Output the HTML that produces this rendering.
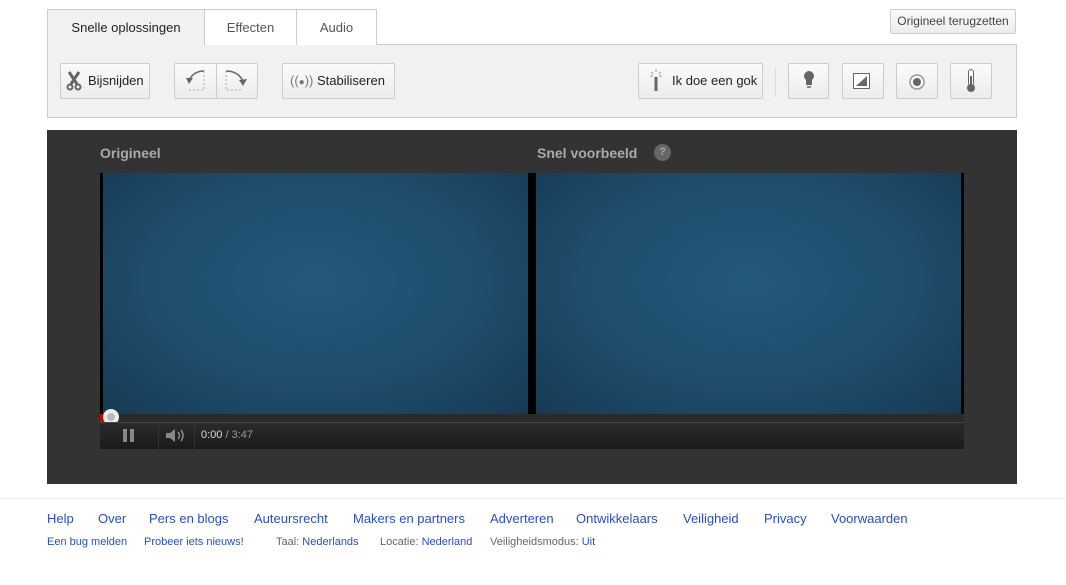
<!DOCTYPE html>
<html><head><meta charset="utf-8"><style>
*{margin:0;padding:0;box-sizing:border-box}
body{width:1066px;height:585px;background:#fff;font-family:"Liberation Sans",Arial,sans-serif;position:relative;overflow:hidden}
.a{position:absolute}
.tab{position:absolute;top:9px;height:36px;border:1px solid #ccc;border-bottom:none;background:#fff;font-size:13px;color:#555;text-align:center;line-height:35px}
.btn{position:absolute;top:63px;height:36px;border:1px solid #ccc;border-radius:2px;background:linear-gradient(#fbfbfb,#ececec);font-size:13px;color:#222;line-height:34px}
.vid{position:absolute;top:173px;height:241px;background:radial-gradient(ellipse at 50% 45%,#24587a 0%,#1f4d6c 55%,#163a54 100%)}
.f1{position:absolute;top:511px;font-size:13px;color:#2a4fbf}
.f2{position:absolute;top:536px;font-size:11px;color:#666}
.f2 b{font-weight:normal;color:#2a4fbf}
</style></head><body>
<div class="a" style="left:47px;top:44px;width:970px;height:74px;background:#f1f1f1;border:1px solid #ccc"></div>
<div class="tab" style="left:47px;width:158px;background:#f1f1f1;color:#222;height:37px">Snelle oplossingen</div>
<div class="tab" style="left:204px;width:93px">Effecten</div>
<div class="tab" style="left:296px;width:81px">Audio</div>
<div class="btn" style="left:890px;top:9px;height:25px;width:126px;line-height:23px;text-align:center;color:#444;font-size:12px">Origineel terugzetten</div>

<div class="btn" style="left:60px;width:90px;padding-left:27px">Bijsnijden</div>
<svg class="a" style="left:66px;top:71px" width="16" height="20" viewBox="0 0 16 20"><path d="M3 1 L11 13 M13 1 L5 13" stroke="#666" stroke-width="3"/><circle cx="4" cy="16" r="2.5" fill="none" stroke="#666" stroke-width="2"/><circle cx="12" cy="16" r="2.5" fill="none" stroke="#666" stroke-width="2"/></svg>
<div class="btn" style="left:174px;width:84px"></div>
<div class="a" style="left:216px;top:64px;width:1px;height:34px;background:#ccc"></div>
<svg class="a" style="left:184px;top:68px" width="66" height="26" viewBox="0 0 66 26"><path d="M5 12 Q10 3 20 3 M20 3 V22 H5" stroke="#aaa" fill="none" stroke-dasharray="2 2" stroke-width="1"/><path d="M5 12 Q10 3 20 3" stroke="#666" fill="none" stroke-width="1.5"/><path d="M2 10 L5 16 L9 10Z" fill="#666"/><path d="M42 3 V22 H58" stroke="#aaa" fill="none" stroke-dasharray="2 2"/><path d="M42 3 Q54 3 59 13" stroke="#666" fill="none" stroke-width="1.5"/><path d="M55 12 L59 18 L63 11Z" fill="#666"/></svg>
<div class="btn" style="left:282px;width:113px;padding-left:7px"><span style="color:#777">((<span style="font-size:10px">&#9679;</span>))</span> Stabiliseren</div>

<div class="btn" style="left:638px;width:125px;padding-left:33px">Ik doe een gok</div>
<svg class="a" style="left:649px;top:68px" width="14" height="24"><path d="M7 9 V23" stroke="#666" stroke-width="3"/><path d="M7 1V4M2 4L4 6M12 4L10 6M1 8H4M10 8H13" stroke="#999"/></svg>
<div class="a" style="left:775px;top:67px;width:1px;height:30px;background:#ddd"></div>
<div class="btn" style="left:788px;width:41px"></div>
<svg class="a" style="left:802px;top:70px" width="14" height="22"><circle cx="7" cy="6" r="5" fill="#666"/><path d="M4 9 H10 V15 H4Z" fill="#666"/><rect x="5" y="16" width="4" height="2" fill="#888"/></svg>
<div class="btn" style="left:842px;width:42px"></div>
<svg class="a" style="left:853px;top:73px" width="18" height="17"><rect x=".5" y=".5" width="16" height="15" fill="#fff" stroke="#666"/><path d="M3 13 L14 3 V13Z" fill="#666"/></svg>
<div class="btn" style="left:896px;width:42px"></div>
<svg class="a" style="left:908px;top:73px" width="18" height="18"><circle cx="9" cy="9" r="7" fill="#fff" stroke="#999" stroke-width="1.5"/><circle cx="9" cy="9" r="4" fill="#666"/></svg>
<div class="btn" style="left:950px;width:42px"></div>
<svg class="a" style="left:965px;top:68px" width="12" height="26"><rect x="3.5" y="1.5" width="5" height="16" rx="2.5" fill="#fff" stroke="#666"/><circle cx="6" cy="20" r="4" fill="#666"/><rect x="5" y="8" width="2" height="12" fill="#666"/></svg>

<div class="a" style="left:47px;top:130px;width:970px;height:354px;background:#333"></div>
<div class="a" style="left:100px;top:145px;font-size:14px;font-weight:bold;color:#aaa">Origineel</div>
<div class="a" style="left:537px;top:145px;font-size:14px;font-weight:bold;color:#aaa">Snel voorbeeld</div>
<div class="a" style="left:654px;top:144px;width:17px;height:17px;border-radius:50%;background:#666;color:#aaa;font-size:11px;font-weight:bold;text-align:center;line-height:17px">?</div>
<div class="a" style="left:100px;top:173px;width:864px;height:241px;background:#000"></div>
<div class="vid" style="left:103px;width:425px"></div>
<div class="vid" style="left:536px;width:425px"></div>
<div class="a" style="left:100px;top:414px;width:864px;height:8px;background:#2a2a2a"></div>
<div class="a" style="left:100px;top:414px;width:5px;height:8px;background:#c00"></div>
<div class="a" style="left:103px;top:409px;width:16px;height:16px;border-radius:50%;background:#eee"><div style="margin:4px;width:8px;height:8px;border-radius:50%;background:#bbb"></div></div>
<div class="a" style="left:100px;top:422px;width:864px;height:27px;background:linear-gradient(#2b2b2b,#1a1a1a);border-top:1px solid #444"></div>
<div class="a" style="left:123px;top:429px;width:4px;height:13px;background:#888"></div>
<div class="a" style="left:130px;top:429px;width:4px;height:13px;background:#888"></div>
<div class="a" style="left:158px;top:423px;width:1px;height:26px;background:#333"></div>
<svg class="a" style="left:165px;top:428px" width="22" height="15"><path d="M1 5H5L10 1V14L5 10H1Z" fill="#888"/><path d="M13 4Q16 7.5 13 11M16 2Q20 7.5 16 13" stroke="#888" fill="none" stroke-width="1.5"/></svg>
<div class="a" style="left:194px;top:423px;width:1px;height:26px;background:#333"></div>
<div class="a" style="left:201px;top:429px;font-size:11px;color:#ddd">0:00 <span style="color:#999">/ 3:47</span></div>

<div class="a" style="left:0;top:498px;width:1066px;height:1px;background:#eee"></div>
<div class="f1" style="left:47px">Help</div>
<div class="f1" style="left:98px">Over</div>
<div class="f1" style="left:149px">Pers en blogs</div>
<div class="f1" style="left:254px">Auteursrecht</div>
<div class="f1" style="left:353px">Makers en partners</div>
<div class="f1" style="left:490px">Adverteren</div>
<div class="f1" style="left:576px">Ontwikkelaars</div>
<div class="f1" style="left:683px">Veiligheid</div>
<div class="f1" style="left:764px">Privacy</div>
<div class="f1" style="left:831px">Voorwaarden</div>
<div class="f2" style="left:47px"><b>Een bug melden</b></div>
<div class="f2" style="left:144px"><b>Probeer iets nieuws!</b></div>
<div class="f2" style="left:276px">Taal: <b>Nederlands</b></div>
<div class="f2" style="left:380px">Locatie: <b>Nederland</b></div>
<div class="f2" style="left:490px">Veiligheidsmodus: <b>Uit</b></div>
</body></html>
